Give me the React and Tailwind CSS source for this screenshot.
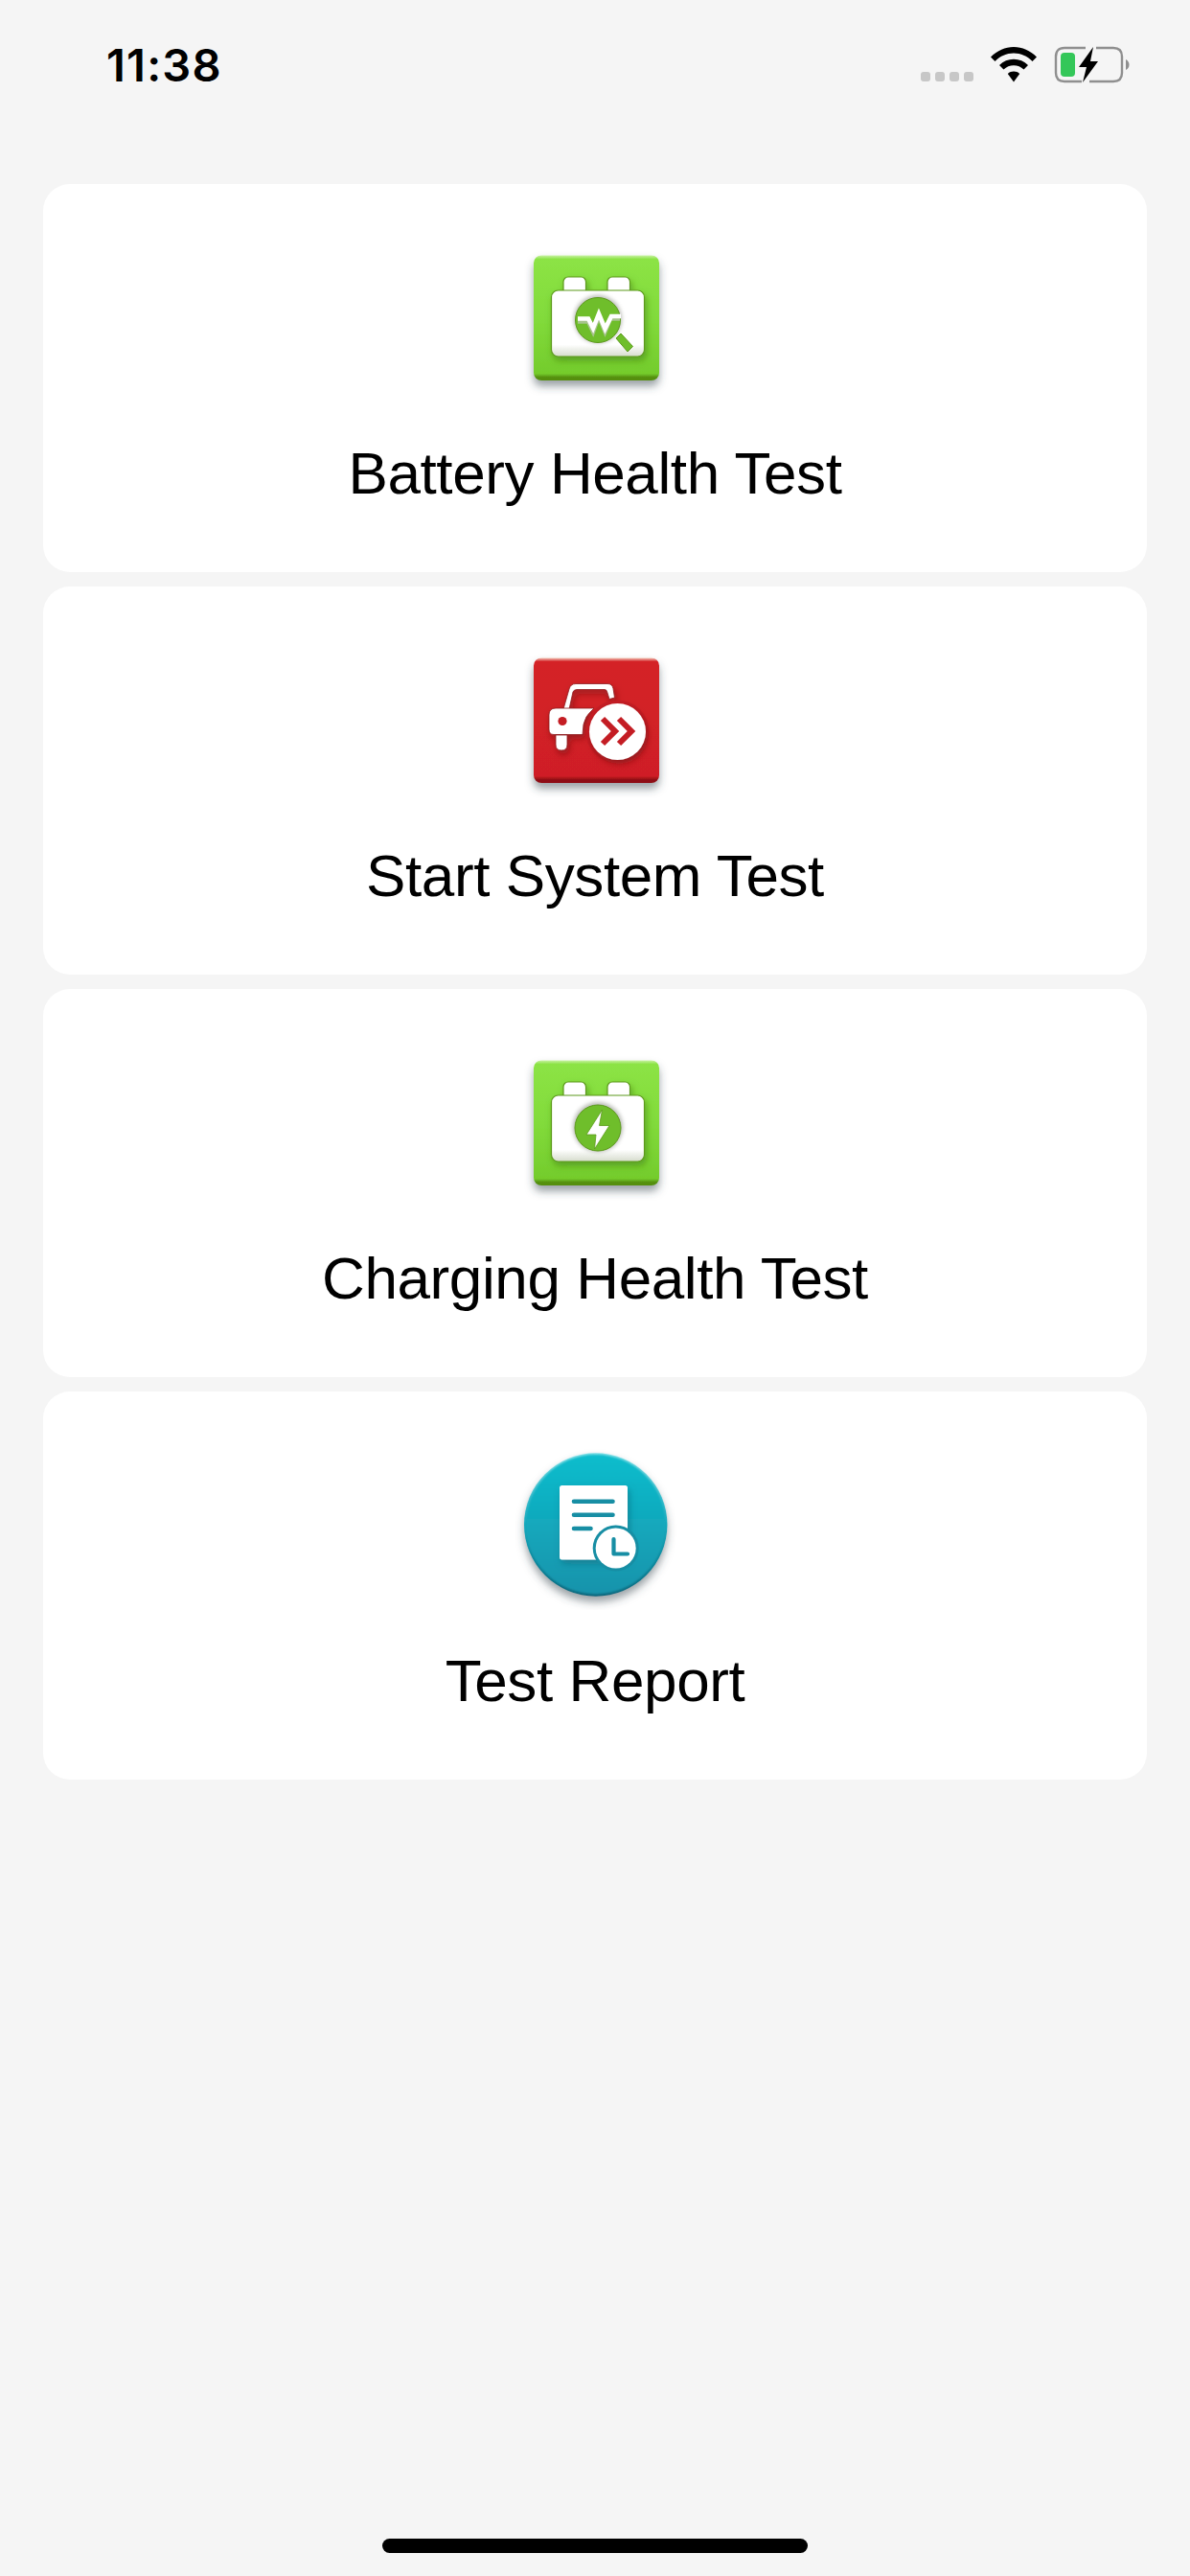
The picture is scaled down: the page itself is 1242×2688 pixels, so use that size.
import React from "react";

// Gradients and shadows used by the tile icons
function Defs({ id, top, mid, bottom, edge, rim, ink }) {
  return (
    <defs>
      <linearGradient id={`${id}-edge`} x1="0" y1="0" x2="0" y2="1">
        <stop offset="0" stopColor={rim} />
        <stop offset="0.03" stopColor={top} />
        <stop offset="0.5" stopColor={mid} />
        <stop offset="0.945" stopColor={bottom} />
        <stop offset="0.975" stopColor={edge} />
        <stop offset="1" stopColor={edge} />
      </linearGradient>
      <linearGradient id={`${id}-face`} x1="0" y1="0" x2="0" y2="1">
        <stop offset="0" stopColor={top} />
        <stop offset="1" stopColor={bottom} />
      </linearGradient>
      <linearGradient id={`${id}-rim`} x1="0" y1="0" x2="0" y2="1">
        <stop offset="0" stopColor={rim} />
        <stop offset="0.5" stopColor={mid} />
        <stop offset="1" stopColor={edge} />
      </linearGradient>
      <linearGradient id={`${id}-white`} x1="0" y1="0" x2="0" y2="1">
        <stop offset="0" stopColor="#ffffff" />
        <stop offset="0.82" stopColor="#ffffff" />
        <stop offset="1" stopColor="#d6dccd" />
      </linearGradient>
      <filter id={`${id}-drop`} x="-30%" y="-30%" width="160%" height="170%">
        <feDropShadow dx="0" dy="6" stdDeviation="4.5" floodColor="#36464f" floodOpacity="0.5" />
      </filter>
      <filter id={`${id}-inner`} x="-30%" y="-30%" width="160%" height="170%">
        <feDropShadow dx="2" dy="4" stdDeviation="3.5" floodColor={ink} floodOpacity="0.55" />
      </filter>
      <filter id={`${id}-glow`} x="-30%" y="-30%" width="160%" height="160%">
        <feGaussianBlur stdDeviation="2.2" />
      </filter>
      <filter id={`${id}-soft`} x="-10%" y="-10%" width="120%" height="120%">
        <feGaussianBlur stdDeviation="1.2" />
      </filter>
    </defs>
  );
}

function Tile({ id, colors, children }) {
  return (
    <svg width="200" height="180" viewBox="0 0 200 180" className="block">
      <Defs id={id} {...colors} />
      <rect x="36" y="26.5" width="131" height="130.5" rx="8" fill={`url(#${id}-edge)`} filter={`url(#${id}-drop)`} />
      {children}
    </svg>
  );
}

const GREEN = { top: "#8ce345", mid: "#82db3b", bottom: "#74cc2c", edge: "#548f10", rim: "#c9f2a4", ink: "#3f7a08" };
const RED = { top: "#d42128", mid: "#d22027", bottom: "#cf1f26", edge: "#8e0f14", rim: "#f2c8b8", ink: "#6e0a0e" };

function BatteryBody({ id }) {
  return (
    <g filter={`url(#${id}-inner)`}>
      <rect x="67" y="49" width="23.5" height="20" rx="5" fill={`url(#${id}-white)`} stroke="#5d9a1d" strokeWidth="1.2" />
      <rect x="113" y="49" width="23.5" height="20" rx="5" fill={`url(#${id}-white)`} stroke="#5d9a1d" strokeWidth="1.2" />
      <rect x="54.5" y="63" width="97" height="69" rx="7" fill={`url(#${id}-white)`} stroke="#5d9a1d" strokeWidth="1.2" />
    </g>
  );
}

function BatteryScanIcon() {
  const id = "scan";
  return (
    <Tile id={id} colors={GREEN}>
      <BatteryBody id={id} />
      <circle cx="103" cy="93" r="25" fill="#8b8f85" opacity="0.6" filter={`url(#${id}-glow)`} />
      <path d="M122 113 L134 127 L139.5 121.5 L127 108 Z" fill="#6fbe2b" stroke="#5d9a1d" strokeWidth="1" />
      <circle cx="103" cy="94" r="23.5" fill="#6fbe2b" stroke="#5d9a1d" strokeWidth="1" />
      <path d="M82 93.5 H93 L98 104 L104 88 L110.5 104 L116 90.5 H126" fill="none" stroke="#a8c48e" strokeWidth="4.6" transform="translate(0 2)" />
      <path d="M82 92.5 H93 L98 102.5 L104 87.5 L110.5 103 L117 90 H127" fill="none" stroke="#ffffff" strokeWidth="4.6" />
    </Tile>
  );
}

function CarStartIcon() {
  const id = "car";
  return (
    <Tile id={id} colors={RED}>
      <g filter={`url(#${id}-inner)`}>
        <path d="M67 80 L73 59 Q74.5 53.5 80 53.5 H113 Q118 53.5 119 58.5 L120.5 68 L115 69.5 L112.5 61.5 Q112 59.5 110 59.5 H81 Q78 59.5 77 62 L73 80 Z" fill="#ffffff" stroke="#8e1a1e" strokeWidth="0.8" />
        <path d="M59 79 H99 L96 82 Q90 87 88 96 L87 106.5 H57 Q52 106.5 52 101 V86 Q52 79 59 79 Z" fill="#ffffff" stroke="#8e1a1e" strokeWidth="0.8" />
        <path d="M59 107 H71 V117 Q71 123 65 123 Q59 123 59 117 Z" fill="#ffffff" stroke="#8e1a1e" strokeWidth="0.8" />
      </g>
      <circle cx="66" cy="92.5" r="4.6" fill="#c41d24" />
      <circle cx="123.5" cy="103.5" r="33" fill="#c41d24" />
      <circle cx="123.5" cy="103.5" r="29.5" fill="#ffffff" filter={`url(#${id}-inner)`} />
      <path d="M108 90 L121 103 L108 116" fill="none" stroke="#c41d24" strokeWidth="6" />
      <path d="M125 90 L138 103 L125 116" fill="none" stroke="#c41d24" strokeWidth="6" />
    </Tile>
  );
}

function BatteryChargeIcon() {
  const id = "charge";
  return (
    <Tile id={id} colors={GREEN}>
      <BatteryBody id={id} />
      <circle cx="103" cy="96" r="26" fill="#8b8f85" opacity="0.6" filter={`url(#${id}-glow)`} />
      <circle cx="103" cy="97" r="24" fill="#6fbe2b" stroke="#5d9a1d" strokeWidth="1" />
      <path d="M107.5 78 L91 104 H101 L99.5 119 L115 94.5 H104.5 Z" fill="#ffffff" stroke="#5d9a1d" strokeWidth="0.8" />
    </Tile>
  );
}

function ReportIcon() {
  const id = "report";
  const teal = "#178ea4";
  return (
    <svg width="200" height="180" viewBox="0 0 200 180" className="block">
      <Defs id={id} top="#0fbdcd" mid="#14a8bc" bottom="#1593ab" edge="#0d6378" rim="#a7e9ee" ink="#0b6478" />
      <circle cx="100.7" cy="91" r="74.7" fill={`url(#${id}-rim)`} filter={`url(#${id}-drop)`} />
      <circle cx="100.7" cy="90.5" r="73" fill={`url(#${id}-face)`} filter={`url(#${id}-soft)`} />
      <g filter={`url(#${id}-inner)`}>
        <rect x="63" y="50" width="71" height="77.5" rx="2.5" fill="#ffffff" />
      </g>
      <path d="M78 66.7 H118.5 M78 80.7 H118.5 M78 95 H95.5" stroke={teal} strokeWidth="4.6" strokeLinecap="round" fill="none" />
      <circle cx="121.7" cy="115.5" r="24" fill={teal} />
      <circle cx="121.7" cy="115.5" r="21" fill="#ffffff" />
      <path d="M119.5 106 V121.5 H134" stroke={teal} strokeWidth="4.2" strokeLinecap="round" strokeLinejoin="round" fill="none" />
    </svg>
  );
}

function MenuCard({ icon, label }) {
  return (
    <div className="flex h-[405px] flex-col items-center rounded-[28px] bg-white pt-[48px]">
      {icon}
      <div className="mt-[38px] font-['Liberation_Sans',sans-serif] text-[62px] leading-[72px] tracking-[-0.4px] text-black">{label}</div>
    </div>
  );
}

function StatusIcons() {
  return (
    <div className="flex items-start">
      <div className="mt-[75px] flex gap-[5px]">
        <span className="h-[10px] w-[10px] rounded-[3px] bg-[#c7c7c7]" />
        <span className="h-[10px] w-[10px] rounded-[3px] bg-[#c7c7c7]" />
        <span className="h-[10px] w-[10px] rounded-[3px] bg-[#c7c7c7]" />
        <span className="h-[10px] w-[10px] rounded-[3px] bg-[#c7c7c7]" />
      </div>
      <svg width="48" height="37" viewBox="0 0 48 37" className="ml-[18px] mt-[49px]">
        <path d="M24 0 C33 0 41 3.6 48 10.5 L43.5 15 C38 9.6 31.4 6.6 24 6.6 C16.6 6.6 10 9.6 4.5 15 L0 10.5 C7 3.6 15 0 24 0 Z" fill="#000" />
        <path d="M24 12.8 C29.8 12.8 34.8 15 39 19 L34.5 23.5 C31.6 20.8 28 19.3 24 19.3 C20 19.3 16.4 20.8 13.5 23.5 L9 19 C13.2 15 18.2 12.8 24 12.8 Z" fill="#000" />
        <path d="M24 25.6 C26.4 25.6 28.4 26.4 30.2 28 L24 36.6 L17.8 28 C19.6 26.4 21.6 25.6 24 25.6 Z" fill="#000" />
      </svg>
      <svg width="80" height="40" viewBox="0 0 80 40" className="ml-[18px] mt-[48px]">
        <path d="M33 2 H11 Q2 2 2 11 V28 Q2 37 11 37 H29 M44 2 H62 Q71 2 71 11 V28 Q71 37 62 37 H37" fill="none" stroke="#8f8f8f" strokeWidth="2.4" />
        <path d="M75 14 Q78.5 16 78.5 19.5 Q78.5 23 75 25 Z" fill="#8f8f8f" />
        <rect x="7" y="7" width="15" height="25" rx="4" fill="#34c759" />
        <path d="M41 1 L26 22 H34 L30 38 L46 16 H38 Z" fill="#000" />
      </svg>
    </div>
  );
}

export default function App() {
  return (
    <div className="flex h-[2688px] w-[1242px] flex-col bg-[#f5f5f5] font-['Inter','Liberation_Sans',sans-serif]">
      <header className="flex h-[192px] items-start justify-between pl-[111px] pr-[62px]">
        <div className="pt-[40px] text-[47px] font-semibold leading-[56px] tracking-[1.2px] text-black">11:38</div>
        <StatusIcons />
      </header>
      <main className="flex flex-col gap-[15px] px-[45px]">
        <MenuCard icon={<BatteryScanIcon />} label="Battery Health Test" />
        <MenuCard icon={<CarStartIcon />} label="Start System Test" />
        <MenuCard icon={<BatteryChargeIcon />} label="Charging Health Test" />
        <MenuCard icon={<ReportIcon />} label="Test Report" />
      </main>
      <div className="mt-auto flex justify-center pb-[24px]">
        <div className="h-[15px] w-[444px] rounded-full bg-black" />
      </div>
    </div>
  );
}
